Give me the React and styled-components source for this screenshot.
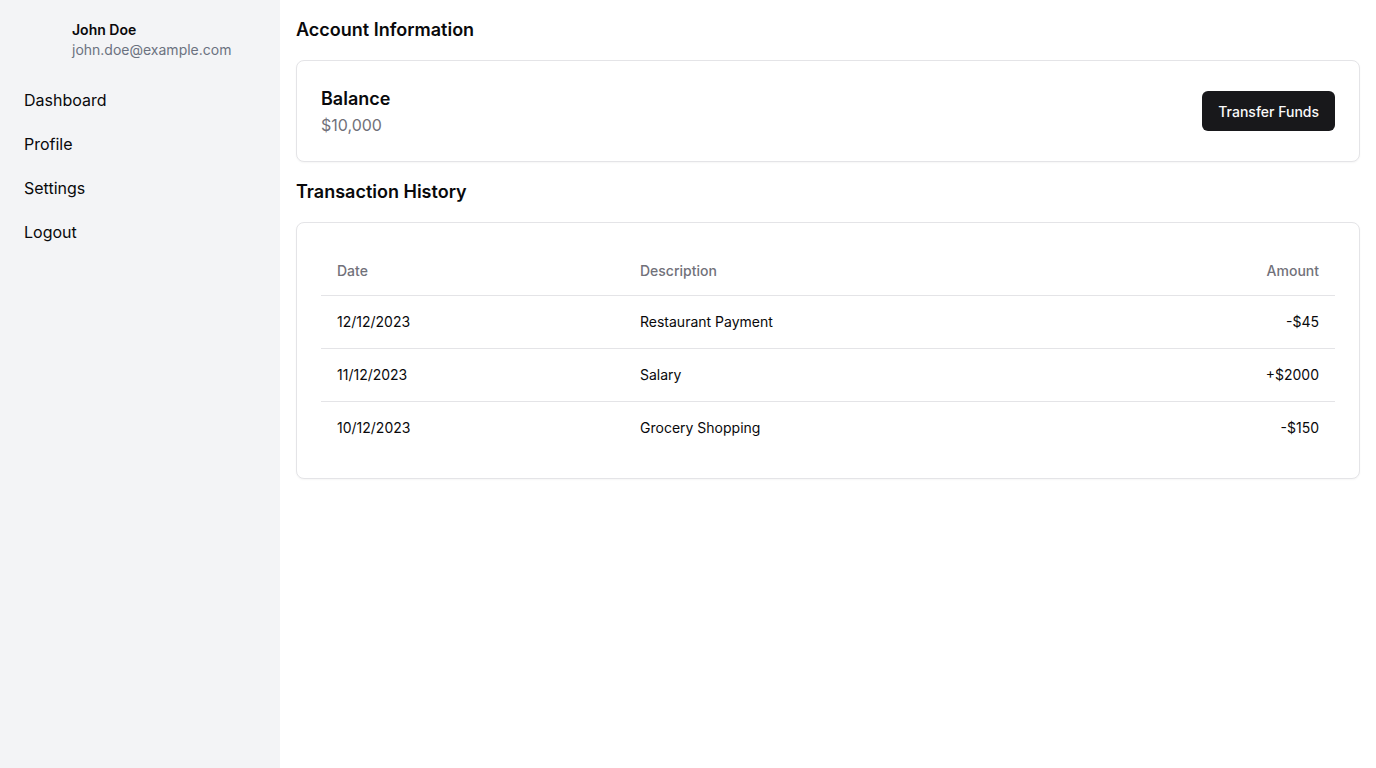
import React from "react";
import styled, { createGlobalStyle } from "styled-components";

const GlobalStyle = createGlobalStyle`
  * { box-sizing: border-box; }
  body {
    margin: 0;
    font-family: Inter, "Noto Sans", sans-serif;
    color: #09090b;
    background: #ffffff;
  }
`;

const transactions = [
  { date: "12/12/2023", description: "Restaurant Payment", amount: "-$45" },
  { date: "11/12/2023", description: "Salary", amount: "+$2000" },
  { date: "10/12/2023", description: "Grocery Shopping", amount: "-$150" },
];

export default function App() {
  return (
    <>
      <GlobalStyle />
      <Layout>
        <Sidebar>
          <UserBlock>
            <Avatar />
            <div>
              <UserName>John Doe</UserName>
              <UserEmail>john.doe@example.com</UserEmail>
            </div>
          </UserBlock>
          <Nav>
            <NavItem href="#">Dashboard</NavItem>
            <NavItem href="#">Profile</NavItem>
            <NavItem href="#">Settings</NavItem>
            <NavItem href="#">Logout</NavItem>
          </Nav>
        </Sidebar>
        <Main>
          <SectionTitle>Account Information</SectionTitle>
          <Card>
            <BalanceRow>
              <div>
                <BalanceLabel>Balance</BalanceLabel>
                <BalanceValue>$10,000</BalanceValue>
              </div>
              <Button>Transfer Funds</Button>
            </BalanceRow>
          </Card>
          <SectionTitle>Transaction History</SectionTitle>
          <Card>
            <Table>
              <colgroup>
                <col style={{ width: 303 }} />
                <col />
                <col style={{ width: 200 }} />
              </colgroup>
              <thead>
                <tr>
                  <Th>Date</Th>
                  <Th>Description</Th>
                  <Th $right>Amount</Th>
                </tr>
              </thead>
              <tbody>
                {transactions.map((t) => (
                  <Tr key={t.date}>
                    <Td>{t.date}</Td>
                    <Td>{t.description}</Td>
                    <Td $right>{t.amount}</Td>
                  </Tr>
                ))}
              </tbody>
            </Table>
          </Card>
        </Main>
      </Layout>
    </>
  );
}

const Layout = styled.div`
  display: flex;
  min-height: 100vh;
`;

const Sidebar = styled.aside`
  width: 280px;
  flex-shrink: 0;
  background: #f3f4f6;
  padding: 16px;
`;

const UserBlock = styled.div`
  display: flex;
  align-items: center;
  gap: 8px;
  margin-bottom: 16px;
`;

const Avatar = styled.div`
  width: 48px;
  height: 48px;
  border-radius: 50%;
`;

const UserName = styled.div`
  font-size: 14px;
  line-height: 20px;
  font-weight: 600;
  color: #09090b;
`;

const UserEmail = styled.div`
  font-size: 14px;
  line-height: 20px;
  color: #6b7280;
`;

const Nav = styled.nav`
  display: flex;
  flex-direction: column;
  gap: 4px;
`;

const NavItem = styled.a`
  display: block;
  padding: 8px;
  font-size: 16px;
  line-height: 24px;
  color: #09090b;
  text-decoration: none;
`;

const Main = styled.main`
  flex: 1;
  padding: 16px;
`;

const SectionTitle = styled.h2`
  margin: 0 0 16px;
  font-size: 18px;
  line-height: 28px;
  font-weight: 600;
`;

const Card = styled.div`
  border: 1px solid #e4e4e7;
  border-radius: 8px;
  background: #ffffff;
  padding: 24px;
  margin-bottom: 16px;
  box-shadow: 0 1px 2px rgba(0, 0, 0, 0.04);
`;

const BalanceRow = styled.div`
  display: flex;
  align-items: center;
  justify-content: space-between;
`;

const BalanceLabel = styled.div`
  font-size: 18px;
  line-height: 28px;
  font-weight: 600;
`;

const BalanceValue = styled.div`
  font-size: 16px;
  line-height: 24px;
  color: #71717a;
`;

const Button = styled.button`
  height: 40px;
  padding: 0 16px;
  border: none;
  border-radius: 6px;
  background: #18181b;
  color: #fafafa;
  font-family: inherit;
  font-size: 14px;
  font-weight: 500;
  cursor: pointer;
`;

const Table = styled.table`
  width: 100%;
  border-collapse: collapse;
  table-layout: fixed;
  font-size: 14px;
`;

const Th = styled.th`
  height: 48px;
  padding: 0 16px;
  text-align: ${(p) => (p.$right ? "right" : "left")};
  font-weight: 500;
  color: #71717a;
  border-bottom: 1px solid #e4e4e7;
`;

const Tr = styled.tr`
  border-bottom: 1px solid #e4e4e7;
  &:last-child {
    border-bottom: none;
  }
`;

const Td = styled.td`
  padding: 16px;
  line-height: 20px;
  text-align: ${(p) => (p.$right ? "right" : "left")};
  color: #09090b;
`;
